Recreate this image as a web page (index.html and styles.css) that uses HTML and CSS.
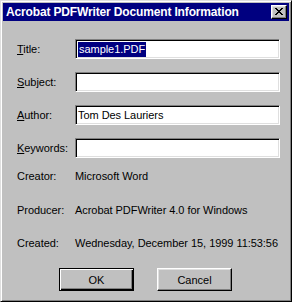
FILE: index.html
```html
<!DOCTYPE html>
<html lang="en">
<head>
    <meta charset="UTF-8">
    <meta name="viewport" content="width=device-width, initial-scale=1.0">
    <title>Acrobat PDFWriter Document Information</title>
    <link rel="stylesheet" href="styles.css">
</head>
<body>
    <div class="window">
        <div class="titlebar">
            <span class="title">Acrobat PDFWriter Document Information</span>
            <button class="close-btn" type="button">
                <svg width="8" height="7" viewBox="0 0 8 7">
                    <path d="M0 0h2v1h1v1h2v-1h1v-1h2v1h-1v1h-1v1h-1v1h1v1h1v1h1v1h-2v-1h-1v-1h-2v1h-1v1h-2v-1h1v-1h1v-1h1v-1h-1v-1h-1v-1h-1z" fill="#000"/>
                </svg>
            </button>
        </div>

        <div class="content">
            <div class="row field-row">
                <label class="label"><u>T</u>itle:</label>
                <div class="field"><span class="selected">sample1.PDF</span></div>
            </div>
            <div class="row field-row">
                <label class="label"><u>S</u>ubject:</label>
                <div class="field"></div>
            </div>
            <div class="row field-row">
                <label class="label"><u>A</u>uthor:</label>
                <div class="field">Tom Des Lauriers</div>
            </div>
            <div class="row field-row">
                <label class="label"><u>K</u>eywords:</label>
                <div class="field"></div>
            </div>

            <div class="row info-row first-info">
                <span class="label">Creator:</span>
                <span class="value">Microsoft Word</span>
            </div>
            <div class="row info-row producer">
                <span class="label">Producer:</span>
                <span class="value">Acrobat PDFWriter 4.0 for Windows</span>
            </div>
            <div class="row info-row">
                <span class="label">Created:</span>
                <span class="value">Wednesday, December 15, 1999 11:53:56</span>
            </div>

            <div class="buttons">
                <button class="btn default-btn" type="button">OK</button>
                <button class="btn" type="button">Cancel</button>
            </div>
        </div>
    </div>
</body>
</html>
```

FILE: styles.css
```css
/* General Styles */
body {
    margin: 0;
    background-color: #ffffff;
    font-family: 'Liberation Sans', Arial, sans-serif;
    font-size: 11px;
    letter-spacing: -0.05px;
    color: #000000;
}

/* Window frame */
.window {
    box-sizing: border-box;
    width: 292px;
    height: 302px;
    padding: 2px;
    background-color: #c0c0c0;
    border: 1px solid;
    border-color: #dfdfdf #000000 #000000 #dfdfdf;
    box-shadow: inset 1px 1px 0 #ffffff, inset -1px -1px 0 #808080;
}

.titlebar {
    display: flex;
    align-items: center;
    justify-content: space-between;
    height: 18px;
    background-color: #000080;
    color: #ffffff;
    padding: 0 2px 0 3px;
}

.title {
    font-weight: bold;
    font-size: 12px;
    letter-spacing: -0.15px;
    white-space: nowrap;
}

.close-btn {
    box-sizing: border-box;
    width: 16px;
    height: 14px;
    padding: 0;
    display: flex;
    align-items: center;
    justify-content: center;
    background-color: #c0c0c0;
    border: 1px solid;
    border-color: #ffffff #000000 #000000 #ffffff;
    box-shadow: inset -1px -1px 0 #808080, inset 1px 1px 0 #dfdfdf;
}

.close-btn svg {
    display: block;
    margin: 0 0 1px 0;
}

/* Form rows */
.content {
    padding: 18px 0 0 14px;
}

.row {
    display: flex;
    align-items: center;
    height: 20px;
}

.field-row + .field-row {
    margin-top: 13px;
}

.label {
    width: 58px;
    flex-shrink: 0;
}

.field {
    box-sizing: border-box;
    width: 205px;
    height: 20px;
    padding: 2px 0 0 2px;
    background-color: #ffffff;
    border: 1px solid;
    border-color: #808080 #ffffff #ffffff #808080;
    box-shadow: inset 1px 1px 0 #000000, inset -1px -1px 0 #dfdfdf;
    line-height: 15px;
    white-space: nowrap;
}

.selected {
    display: inline-block;
    background-color: #000080;
    color: #ffffff;
    padding: 0 1px;
}

.info-row {
    margin-top: 13px;
}

.first-info {
    margin-top: 8px;
}

.producer {
    margin-top: 14px;
}

/* Buttons */
.buttons {
    display: flex;
    gap: 23px;
    margin: 15px 0 0 42px;
}

.btn {
    box-sizing: border-box;
    width: 75px;
    height: 23px;
    padding: 0;
    font-family: 'Liberation Sans', Arial, sans-serif;
    font-size: 11px;
    color: #000000;
    background-color: #c0c0c0;
    border: 1px solid;
    border-color: #ffffff #000000 #000000 #ffffff;
    box-shadow: inset -1px -1px 0 #808080, inset 1px 1px 0 #dfdfdf;
}

.default-btn {
    border: 1px solid #000000;
    box-shadow: inset 1px 1px 0 #ffffff, inset -1px -1px 0 #000000, inset -2px -2px 0 #808080;
}
```
